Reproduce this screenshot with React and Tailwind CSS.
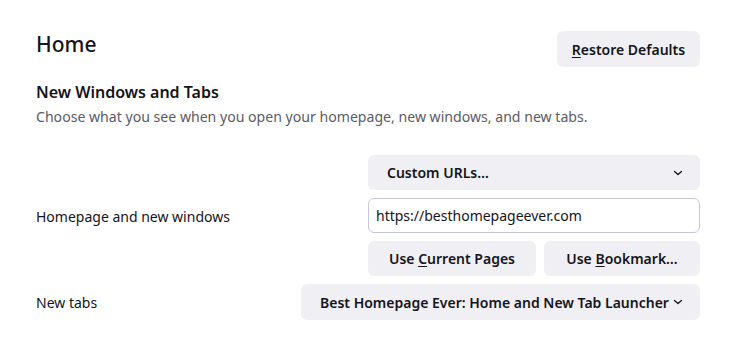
import React from "react";

function Chevron() {
  return (
    <svg width="10" height="10" viewBox="0 0 10 10" fill="none" className="shrink-0">
      <path d="M1.5 3.5 L5 6.5 L8.5 3.5" stroke="#15141a" strokeWidth="1.3" strokeLinecap="round" strokeLinejoin="round" />
    </svg>
  );
}

export default function App() {
  return (
    <div
      className="w-[753px] h-[352px] bg-white text-[#15141a] pl-[36px] pr-[53px] pt-[31px]"
      style={{ fontFamily: '"Noto Sans", "Open Sans", sans-serif' }}
    >
      <div className="flex justify-between items-center h-[36px]">
        <h1 className="text-[21px] font-medium leading-none -mt-[10px]">Home</h1>
        <button className="h-[36px] w-[143px] rounded-[6px] bg-[#f0f0f4] text-[14px] font-semibold whitespace-nowrap">
          <span className="underline underline-offset-2">R</span>estore Defaults
        </button>
      </div>
      <h2 className="mt-[14px] text-[16px] font-semibold leading-[22px]">New Windows and Tabs</h2>
      <p className="mt-[4px] text-[14.1px] leading-[20px] text-[#5b5b66]">
        Choose what you see when you open your homepage, new windows, and new tabs.
      </p>
      <div className="mt-[28px] flex items-center justify-between">
        <span className="text-[14px] mt-[1px]">Homepage and new windows</span>
        <div className="w-[332px] flex flex-col gap-[8px]">
          <button className="h-[35px] rounded-[6px] bg-[#f0f0f4] flex items-center justify-between pl-[19px] pr-[17px] text-[14px] font-semibold">
            <span>Custom URLs…</span>
            <Chevron />
          </button>
          <div className="h-[35px] rounded-[6px] border border-[#c8c6d4] flex items-center px-[7px] text-[14px]">
            https://besthomepageever.com
          </div>
          <div className="flex gap-[8px]">
            <button className="h-[35px] w-[168px] rounded-[6px] bg-[#f0f0f4] text-[14px] font-semibold whitespace-nowrap">
              Use <span className="underline underline-offset-2">C</span>urrent Pages
            </button>
            <button className="h-[35px] flex-1 rounded-[6px] bg-[#f0f0f4] text-[14px] font-semibold whitespace-nowrap">
              Use <span className="underline underline-offset-2">B</span>ookmark…
            </button>
          </div>
        </div>
      </div>
      <div className="mt-[8px] flex items-center justify-between">
        <span className="text-[14px]">New tabs</span>
        <button className="h-[36px] w-[399px] rounded-[6px] bg-[#f0f0f4] flex items-center justify-between pl-[19px] pr-[17px] text-[14px] font-semibold whitespace-nowrap">
          <span>Best Homepage Ever: Home and New Tab Launcher</span>
          <Chevron />
        </button>
      </div>
    </div>
  );
}
